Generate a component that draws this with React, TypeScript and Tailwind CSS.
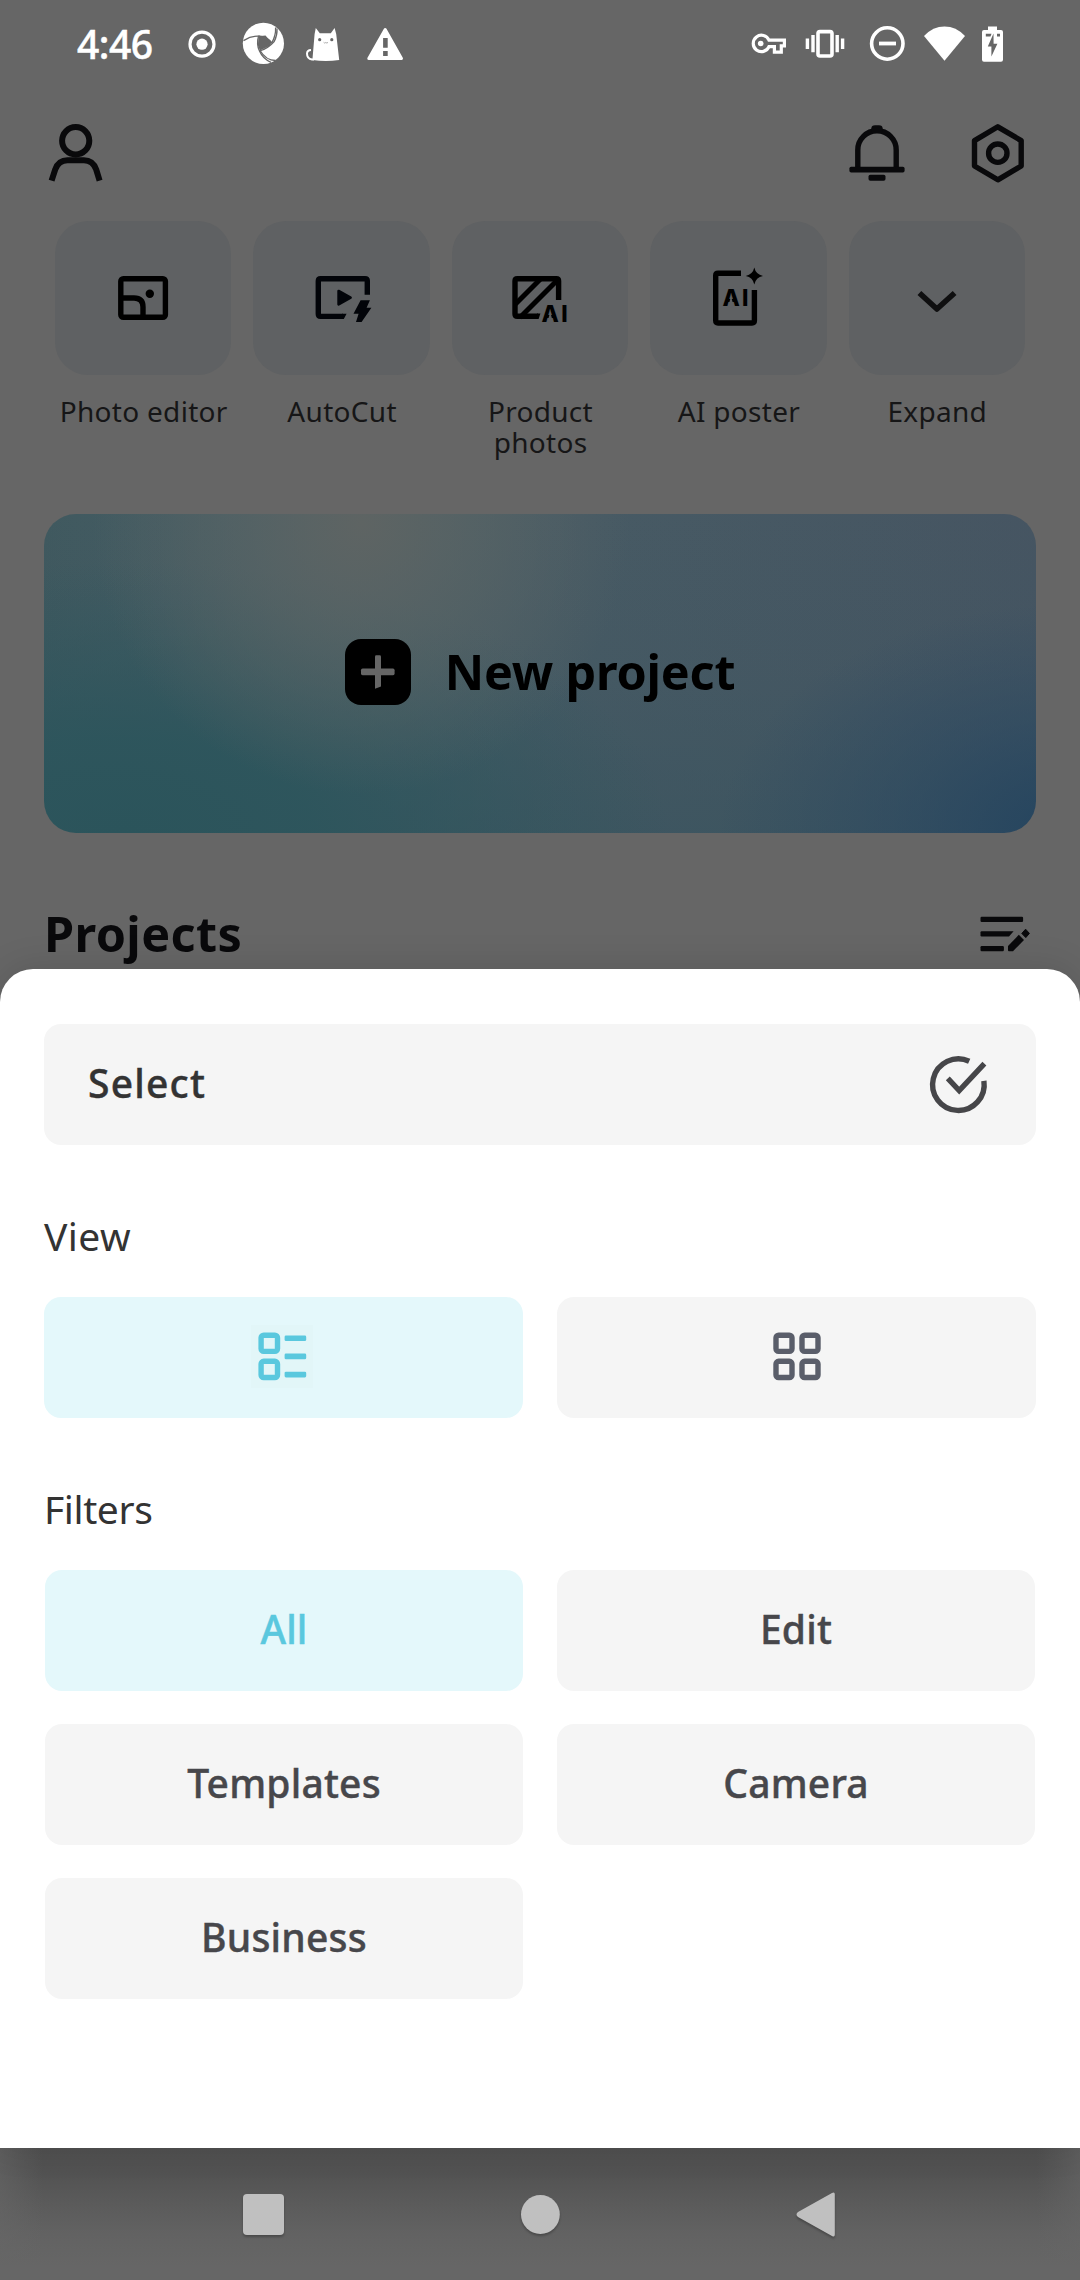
import type { ReactNode } from 'react';

type IconProps = {
  box: [number, number, number, number];
  className?: string;
  children: ReactNode;
};

function Icon({ box, className = '', children }: IconProps) {
  return (
    <svg
      viewBox={box.join(' ')}
      width={box[2]}
      height={box[3]}
      fill="none"
      stroke="currentColor"
      strokeWidth={5.4}
      className={`block shrink-0 overflow-visible ${className}`}
    >
      {children}
    </svg>
  );
}

function StatusBar() {
  return (
    <div className="flex h-[87px] items-center justify-between pr-[76px] pl-[77px] text-white">
      <div className="flex h-full items-center">
        <span className="w-[77px] text-[39px] leading-[48px] font-medium tracking-[-0.5px] [-webkit-text-stroke:0.5px_white]">4:46</span>
        <Icon box={[188, 29, 28, 28]} className="ml-[34px]">
          <circle cx="202" cy="43.2" r="12" strokeWidth="3.2" />
          <circle cx="202" cy="43.2" r="5.6" fill="currentColor" stroke="none" />
        </Icon>
        <Icon box={[242, 22, 44, 44]} className="ml-[26px]">
          <circle cx="263.4" cy="43.4" r="20.6" fill="currentColor" stroke="none" />
          <path
            d="M258.5 36.2 L265.5 35.6 L271.5 42.6 L269.8 45.8 L260 50.6 L257.9 45.5 Z"
            fill="#666666"
            stroke="none"
          />
          <g stroke="#666666" strokeWidth="1.3">
            <path d="M243.5 40.6 Q251.5 35.5 259.5 36.2" />
            <path d="M258.5 36.2 Q256.2 44.5 259.5 51 Q263 59 271 62.3" />
            <path d="M260 50.5 Q266 60.5 275.5 60.5" />
            <path d="M258.5 36 Q267 36.5 271.8 43" />
            <path d="M271.6 43 Q276 36 275.6 27.5" />
            <path d="M259.6 51 Q268 48.5 274.2 41.5 Q277.5 35 277 28.5" />
          </g>
        </Icon>
        <Icon box={[305, 26, 36, 36]} className="ml-[19px]">
          <path
            d="M315.8 28 L319.8 33.2 H330.8 L334.6 28 L336.2 34 L339.2 60 Q326 62 312.4 60 L314.6 34 Z"
            fill="currentColor"
            stroke="none"
          />
          <path d="M314 59.5 H312 Q307 58.8 307 53.5 Q307.2 50.2 311 50" strokeWidth="2" />
          <g fill="#666666" stroke="none">
            <circle cx="319.7" cy="39.7" r="1.6" />
            <circle cx="331.8" cy="39.7" r="1.6" />
          </g>
          <path d="M323.6 42.3 Q324.8 43.8 325.8 42.5 Q327 43.8 328 42.3" stroke="#999999" strokeWidth="0.8" />
        </Icon>
        <Icon box={[366, 26, 38, 34]} className="ml-[25px]">
          <path
            d="M385.2 28.5 L401.5 57.5 H368.8 Z"
            fill="currentColor"
            strokeWidth="3"
            strokeLinejoin="round"
          />
          <path d="M385.4 37 V46.7 M385.4 50 V55" stroke="#666666" strokeWidth="4.6" />
        </Icon>
      </div>
      <div className="flex h-full items-center">
        <Icon box={[750, 26, 37, 34]}>
          <path
            d="M769 39.2 H784.4 V44.8 H781.3 V51.2 H774.4 V45.6 H769 A8.2 8.2 0 1 1 769 39.2 Z"
            strokeWidth="3.2"
          />
          <circle cx="760.7" cy="42.5" r="2.8" fill="currentColor" stroke="none" />
        </Icon>
        <Icon box={[805, 26, 40, 34]} className="ml-[18px]">
          <rect x="818" y="30.6" width="14" height="24.4" rx="2" strokeWidth="3.6" />
          <path d="M813 34 V51.2 M837.2 34 V51.2 M807.4 37.5 V48 M842.6 37.5 V48" strokeWidth="3.4" />
        </Icon>
        <Icon box={[869, 24, 37, 37]} className="ml-[24px]">
          <circle cx="887.3" cy="42.5" r="15.7" strokeWidth="3.6" />
          <path d="M879 42.5 H896" strokeWidth="3.8" />
        </Icon>
        <Icon box={[923, 24, 43, 37]} className="ml-[17px]">
          <path d="M924 35 Q933 25.6 944.5 25.6 Q956 25.6 965 35 L944.5 59.8 Z" fill="currentColor" stroke="none" />
        </Icon>
        <Icon box={[980, 24, 24, 38]} className="ml-[14px]">
          <path
            d="M988 25.5 H997 V29 H1001 Q1003 29 1003 31 V58.8 Q1003 60.8 1001 60.8 H984 Q982 60.8 982 58.8 V31 Q982 29 984 29 H988 Z"
            fill="currentColor"
            stroke="none"
          />
          <path
            d="M993.5 32.5 L987.8 45.6 H991.4 V55.5 L997.4 42.8 H993.6 Z M985.8 32.8 H991.5 L990.5 35.6 H985.8 Z M997 32.8 H1000 V35.6 H997 Z"
            fill="#666666"
            stroke="none"
          />
        </Icon>
      </div>
    </div>
  );
}

function Header() {
  return (
    <header className="flex h-[134px] items-start justify-between pt-[36px] pr-[54px] pl-[48px] text-[#09090b]">
      <Icon box={[48, 123, 56, 60]}>
        <ellipse cx="75.7" cy="140.7" rx="13.6" ry="13.7" strokeWidth="6" />
        <path d="M51.6 180.6 L55.2 169.5 Q58.6 160.3 67.5 160.3 H83.9 Q92.8 160.3 96.2 169.5 L99.6 180.6" strokeWidth="6" />
      </Icon>
      <div className="flex gap-[64px]">
        <Icon box={[848, 123, 58, 60]}>
          <path d="M857.8 168 V150 A19.2 19.2 0 0 1 896.2 150 V168" />
          <rect x="849.4" y="166.8" width="55.2" height="5.8" rx="1.8" fill="currentColor" stroke="none" />
          <rect x="868.5" y="174.8" width="17" height="6" rx="1.8" fill="currentColor" stroke="none" />
          <path d="M871.3 132 V128.5 Q871.5 125.2 875 125.2 H879 Q882.5 125.2 882.7 128.5 V132 Z" fill="currentColor" stroke="none" />
        </Icon>
        <Icon box={[970, 123, 56, 60]}>
          <path
            d="M997.8 126.8 L1021.2 140.6 V166 L997.8 179.8 L974.5 166 V140.6 Z"
            strokeLinejoin="round"
          />
          <circle cx="997.8" cy="153.2" r="9.2" />
        </Icon>
      </div>
    </header>
  );
}

const aiLetters = "font-['Inter',sans-serif] text-[22.5px] font-extrabold";

const tools = [
  {
    label: 'Photo editor',
    icon: (
      <Icon box={[55, 221, 176, 154]}>
        <rect x="120.8" y="278.7" width="44.6" height="38.6" rx="2.5" />
        <path d="M120.8 298 H134 Q143 298 143 307 V317" />
        <circle cx="149.8" cy="293.7" r="4.2" fill="currentColor" stroke="none" />
      </Icon>
    ),
  },
  {
    label: 'AutoCut',
    icon: (
      <Icon box={[253, 221, 177, 154]} className="text-[#020409]">
        <path d="M367.3 294.8 V281 Q367.3 278.7 365 278.7 H320.6 Q318.3 278.7 318.3 281 V314 Q318.3 316.4 320.6 316.4 H343" />
        <path d="M342 313.8 H346.6 L343.8 319 H342 Z" fill="currentColor" stroke="none" />
        <path d="M338.6 291 L350.6 297.6 L338.6 304.3 Z" fill="currentColor" strokeWidth="2.6" strokeLinejoin="round" />
        <path
          d="M360.6 300.2 H369.9 L366.6 307.8 H371.4 L361.6 322 H356 L358.6 313.8 H353.5 Z"
          fill="currentColor"
          stroke="none"
        />
      </Icon>
    ),
  },
  {
    label: 'Product photos',
    icon: (
      <Icon box={[452, 221, 176, 154]}>
        <path d="M558.6 300 V281 Q558.6 278.7 556.3 278.7 H517.3 Q515 278.7 515 281 V314 Q515 316.3 517.3 316.3 H538" />
        <path d="M537 313.6 H540.4 L538.6 319 H537 Z" fill="currentColor" stroke="none" />
        <path d="M515.5 304 L540.5 279 M520 317.5 L558 279.5" strokeWidth="5" />
        <text x="541.6" y="322" textLength="26" lengthAdjust="spacing" fill="currentColor" stroke="none" className={aiLetters}>AI</text>
        <path d="M550.2 312 L547.2 323 H553.2 Z" fill="#5f6163" stroke="none" />
      </Icon>
    ),
  },
  {
    label: 'AI poster',
    icon: (
      <Icon box={[650, 221, 177, 154]}>
        <path d="M741 273.2 H718 Q715.7 273.2 715.7 275.5 V320.6 Q715.7 323 718 323 H752 Q754.4 323 754.4 320.6 V290" />
        <path d="M754.3 267.6 Q755.8 274.5 763 276 Q755.8 277.5 754.3 284.4 Q752.8 277.5 745.8 276 Q752.8 274.5 754.3 267.6 Z" fill="currentColor" stroke="none" />
        <text x="722.4" y="306.2" textLength="26" lengthAdjust="spacing" fill="currentColor" stroke="none" className={aiLetters}>AI</text>
        <path d="M731 296.2 L728 307.2 H734 Z" fill="#5f6163" stroke="none" />
      </Icon>
    ),
  },
  {
    label: 'Expand',
    icon: (
      <Icon box={[849, 221, 176, 154]} className="text-[#0f0f10]">
        <path d="M919.4 293 L936.9 309 L954.6 293" strokeWidth="5.6" strokeLinejoin="round" />
      </Icon>
    ),
  },
];

function ToolRow() {
  return (
    <div className="grid grid-cols-5 gap-[22px] px-[55px]">
      {tools.map((tool) => (
        <div key={tool.label} className="flex flex-col items-center">
          <div className="flex h-[154px] w-full items-center justify-center rounded-[33px] bg-[#5f6163] text-black">
            {tool.icon}
          </div>
          <span className="mt-[21px] block h-[62px] pl-px text-center text-[28px] leading-[31px] font-normal tracking-[0.3px] text-[#161617]">
            {tool.label}
          </span>
        </div>
      ))}
    </div>
  );
}

function NewProject() {
  return (
    <div className="mx-[44px] mt-[56px] flex h-[319px] items-center justify-center gap-[34px] rounded-[32px] bg-[radial-gradient(ellipse_27%_85%_at_32%_3%,#5e6463_0%,#5a6464b3_40%,#5e646300_100%),radial-gradient(ellipse_55%_85%_at_8%_100%,#2b545b_0%,#2c555ce6_35%,#2d555b00_100%),radial-gradient(ellipse_36%_72%_at_104%_100%,#24445f_0%,#27466180_50%,#26446000_100%),linear-gradient(180deg,#3a545f00_0%,#3a545f33_50%,#3a545fb3_100%),linear-gradient(90deg,#40595f_0%,#4a6068_30%,#475a64_55%,#465562_100%)]">
      <Icon box={[344, 639, 66, 66]} className="mb-[4px] rounded-[16px] bg-black text-[#666666]">
        <rect x="360" y="668.6" width="33.6" height="6.6" rx="1.6" fill="currentColor" stroke="none" />
        <path d="M374 656.5 Q374 655.2 375.3 655.2 H378.6 Q380 655.2 380 656.5 V686.6 L374 688.8 Z" fill="currentColor" stroke="none" />
      </Icon>
      <span className="mb-[6px] text-[48.5px] leading-[60px] font-bold tracking-[-0.2px] text-black">New project</span>
    </div>
  );
}

function ProjectsBar() {
  return (
    <div className="mt-[71px] flex h-[60px] items-center justify-between pr-[49px] pl-[44px] text-[#09090b]">
      <h1 className="mb-[2px] text-[48.5px] leading-[60px] font-bold tracking-[0.4px]">Projects</h1>
      <Icon box={[980, 905, 51, 60]}>
        <g fill="currentColor" stroke="none">
          <rect x="980.5" y="917.8" width="42.6" height="5.2" rx="1.2" />
          <path d="M981.7 932.3 H1013.6 L1009 937.5 H981.7 Q980.5 937.5 980.5 936.3 V933.5 Q980.5 932.3 981.7 932.3 Z" />
          <rect x="980.5" y="947" width="23.4" height="5.2" rx="1.2" />
          <path d="M1008 947 L1018.8 935.8 L1024 941 L1013 952.2 H1009 Q1008 952.2 1008 951.2 Z" />
          <path d="M1021.8 934.4 L1025.6 930.2 L1029.4 934.4 L1025.8 938.6 Z" strokeWidth="1" stroke="currentColor" strokeLinejoin="round" />
        </g>
      </Icon>
    </div>
  );
}

const filters = ['All', 'Edit', 'Templates', 'Camera', 'Business'];

function OptionsSheet() {
  return (
    <section className="relative -mt-px h-[1179px] rounded-t-[33px] bg-white px-[44px] pt-[55px] shadow-[0_-2px_36px_rgba(0,0,0,0.12)]">
      <button className="flex h-[121px] w-full items-center justify-between rounded-[17px] bg-[#f5f5f5] pr-[48px] pl-[44px] text-[#333333]">
        <span className="pb-[3px] text-[39px] leading-[50px] font-medium tracking-[1.2px] [-webkit-text-stroke:0.4px_#333333]">Select</span>
        <Icon box={[930, 1056, 58, 58]} className="text-[#464649]">
          <path d="M969.2 1061.2 A25.8 25.8 0 1 0 983.9 1080.8" />
          <path d="M947.8 1078.4 L959.2 1090.6 L984.4 1063.6" />
        </Icon>
      </button>

      <h2 className="mt-[66px] text-[39px] leading-[50px] font-normal tracking-[0.4px] text-[#333333]">View</h2>
      <div className="mt-[36px] grid grid-cols-2 gap-[34px]">
        <div className="flex h-[121px] items-center justify-center rounded-[17px] bg-[#e4f8fb] pr-[3px] pb-[2px] text-[#5ac8de]">
          <Icon box={[251, 1324.5, 62, 63]} className="bg-[#e2f6f8]">
            <rect x="261.1" y="1334.7" width="16.4" height="16.2" rx="2.6" />
            <rect x="261.1" y="1360.8" width="16.4" height="16.2" rx="2.6" />
            <g fill="currentColor" stroke="none">
              <rect x="284.6" y="1335" width="21.6" height="5.6" rx="1.4" />
              <rect x="284.6" y="1353" width="21.6" height="5.8" rx="1.4" />
              <rect x="284.6" y="1371.2" width="21.6" height="5.8" rx="1.4" />
            </g>
          </Icon>
        </div>
        <div className="flex h-[121px] items-center justify-center rounded-[17px] bg-[#f5f5f5] pb-[2px] text-[#5a5e6a]">
          <Icon box={[766, 1324.5, 62, 63]}>
            <rect x="776" y="1334.7" width="16" height="16.2" rx="2.6" />
            <rect x="802" y="1334.7" width="16" height="16.2" rx="2.6" />
            <rect x="776" y="1360.8" width="16" height="16.2" rx="2.6" />
            <rect x="802" y="1360.8" width="16" height="16.2" rx="2.6" />
          </Icon>
        </div>
      </div>

      <h2 className="mt-[66px] text-[39px] leading-[50px] font-normal tracking-[-0.4px] text-[#333333]">Filters</h2>
      <div className="mx-px mt-[36px] grid grid-cols-2 gap-x-[34px] gap-y-[33px]">
        {filters.map((name) => (
          <button
            key={name}
            className={
              name === 'All'
                ? 'h-[121px] rounded-[17px] bg-[#e4f8fb] pb-[4px] text-[39px] leading-[50px] font-medium tracking-[0.2px] text-[#5ac8de] [-webkit-text-stroke:0.5px_#5ac8de]'
                : 'h-[121px] rounded-[17px] bg-[#f5f5f5] pb-[4px] text-[39px] leading-[50px] font-medium tracking-[0.2px] text-[#47474b] [-webkit-text-stroke:0.4px_#47474b]'
            }
          >
            {name}
          </button>
        ))}
      </div>
    </section>
  );
}

function NavigationBar() {
  return (
    <nav className="flex h-[132px] items-center bg-[linear-gradient(90deg,#66666699_0%,#66666600_4%,#66666600_96%,#66666699_100%),linear-gradient(180deg,#505050_0%,#525252_18%,#5a5a5a_40%,#626262_65%,#666666_90%)] pt-[2px] pl-[243px] text-[#c0c0c0]">
      <Icon box={[243, 2192, 42, 46]} className="drop-shadow-[0_2px_1px_rgba(0,0,0,0.25)]">
        <rect x="243" y="2194" width="41" height="41" rx="4" fill="currentColor" stroke="none" />
      </Icon>
      <Icon box={[520, 2192, 41, 46]} className="ml-[235px] drop-shadow-[0_2px_1px_rgba(0,0,0,0.25)]">
        <circle cx="540.4" cy="2214.5" r="19.4" fill="currentColor" stroke="none" />
      </Icon>
      <Icon box={[796, 2192, 40, 46]} className="ml-[235px] drop-shadow-[0_2px_1px_rgba(0,0,0,0.25)]">
        <path d="M834.8 2194.4 V2234.6 Q834.8 2237.6 832 2236 L798 2217 Q795 2214.5 798 2212 L832 2193 Q834.8 2191.4 834.8 2194.4 Z" fill="currentColor" stroke="none" />
      </Icon>
    </nav>
  );
}

export default function App() {
  return (
    <div className="h-[2280px] w-[1080px] overflow-hidden bg-[#666666] font-['Noto_Sans',sans-serif]">
      <StatusBar />
      <Header />
      <main className="h-[749px]">
        <ToolRow />
        <NewProject />
        <ProjectsBar />
      </main>
      <OptionsSheet />
      <NavigationBar />
    </div>
  );
}
